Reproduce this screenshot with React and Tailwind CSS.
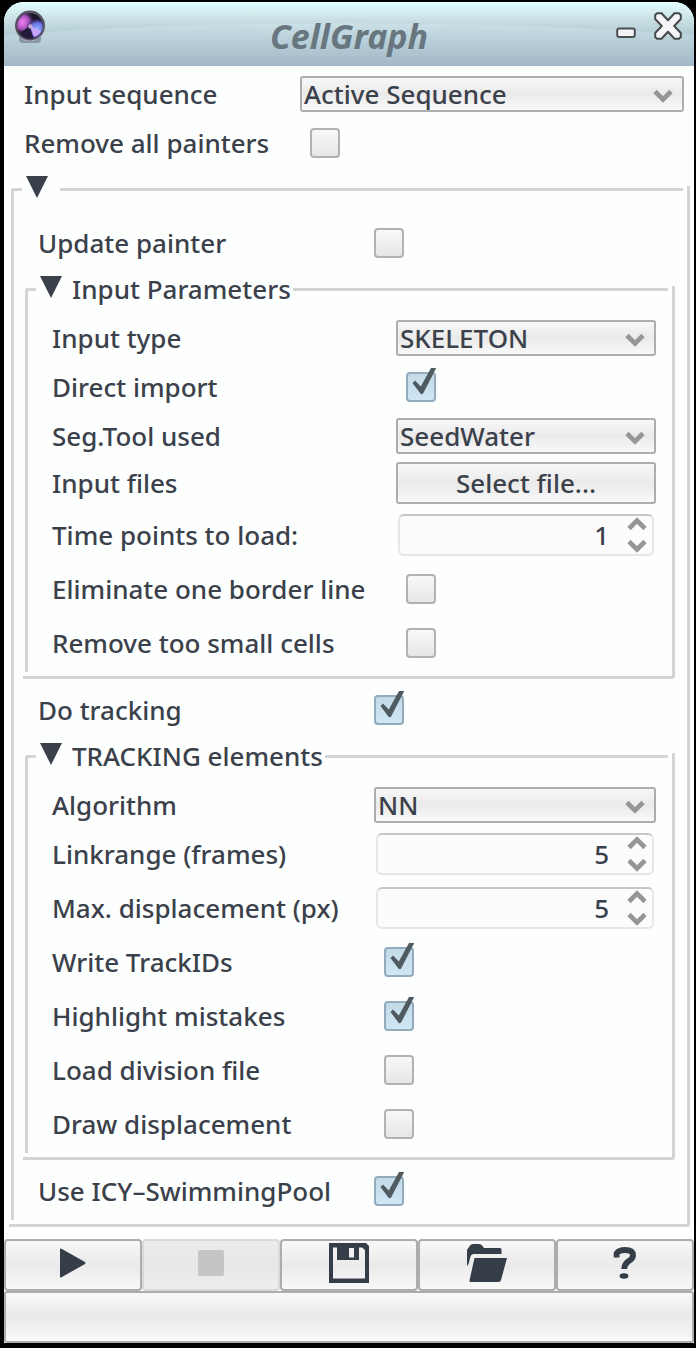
import { useState } from "react";

const face =
  "rounded-[3px] border-2 border-[#adadad] bg-linear-to-b from-[#f8f8f8] via-[#eaeaea] to-[#f9f9f9]";

function Row({ id, label, cols, short, children }) {
  return (
    <div className={`grid items-center ${cols} ${short ? "h-11" : "h-[54px]"}`}>
      <label htmlFor={id} className="whitespace-nowrap">
        {label}
      </label>
      {children}
    </div>
  );
}

function Chevron({ up }) {
  return (
    <svg viewBox="0 0 20 14" className="h-[14px] w-5" fill="none" stroke="#969696" strokeWidth="4.6" aria-hidden="true">
      <path d={up ? "M2 11.5L10 3.5L18 11.5" : "M2 2.5L10 10.5L18 2.5"} />
    </svg>
  );
}

function Select({ id, options }) {
  return (
    <div className="grid items-center">
      <select id={id} className={`col-start-1 row-start-1 h-9 w-full appearance-none pl-[2px] pr-10 leading-8 ${face}`}>
        {options.map((o) => (
          <option key={o}>{o}</option>
        ))}
      </select>
      <span className="pointer-events-none col-start-1 row-start-1 mr-[11px] mt-1 justify-self-end">
        <Chevron />
      </span>
    </div>
  );
}

function Check({ id, checked }) {
  return (
    <div className="ml-[10px] grid w-[30px]">
      <input
        id={id}
        type="checkbox"
        defaultChecked={checked}
        className="peer col-start-1 row-start-1 size-[30px] appearance-none rounded-[4px] border-2 border-[#b2b2b2] bg-linear-to-b from-[#f8f8f8] to-[#e6e6e6] checked:border-[#93abbd] checked:from-[#c3dae7] checked:to-[#cfe7f4]"
      />
      <svg
        viewBox="0 0 30 30"
        className="pointer-events-none invisible col-start-1 row-start-1 size-[30px] overflow-visible peer-checked:visible"
        fill="#505a61"
        aria-hidden="true"
      >
        <path d="M6.5 11L9 8.6L14.8 14.5L25 -4H30.2L17.4 21Q15.7 23.5 14 21Z" />
      </svg>
    </div>
  );
}

function Spinner({ id, initial, label }) {
  const [value, setValue] = useState(initial);
  return (
    <div className="mx-[2px] flex h-[42px] items-center rounded-[6px] border-2 border-[#e6e6e6] border-t-[#c6c6c6] bg-[#fcfcfc]">
      <input
        id={id}
        type="text"
        inputMode="numeric"
        value={value}
        onChange={(e) => setValue(Number(e.target.value) || 0)}
        className="w-0 flex-1 bg-transparent pr-[18px] text-right outline-none"
      />
      <div className="mr-[5px] flex flex-col gap-2">
        <button type="button" aria-label={`Increase ${label}`} onClick={() => setValue(value + 1)}>
          <Chevron up />
        </button>
        <button type="button" aria-label={`Decrease ${label}`} onClick={() => setValue(value - 1)}>
          <Chevron />
        </button>
      </div>
    </div>
  );
}

function Group({ title, className, children }) {
  return (
    <section className={className}>
      <div className="flex h-[38px] items-center pl-[2px]">
        <span className="h-5 w-[11px] self-end rounded-tl-[3px] border-l-[3px] border-t-[3px] border-[#d3d4d4]" />
        <button type="button" className="ml-1 flex items-center whitespace-nowrap" aria-label={title || "Toggle group"}>
          <svg viewBox="0 0 22 22" className="mb-1 size-[22px]" fill="#3b414b" aria-hidden="true">
            <path d="M0 0H22L11 22Z" />
          </svg>
          <span className="ml-[10px] mr-[2px]">{title}</span>
        </button>
        <span className="h-[3px] flex-1 bg-[#d3d4d4]" />
        <span className="ml-1 h-[22px] w-[3px] self-end bg-[#d3d4d4]" />
      </div>
      <div className="flex">
        <span className="mb-1 ml-[2px] w-[3px] bg-[#d3d4d4]" />
        <div className="min-w-0 flex-1 pt-2">{children}</div>
        <span className="w-[3px] bg-[#d3d4d4]" />
      </div>
      <div className="h-[3px] rounded-br-[3px] bg-[#d3d4d4]" />
    </section>
  );
}

const top = "grid-cols-[276px_1fr] pl-5 pr-[10px]";
const outer = "grid-cols-[326px_1fr] pl-6 pr-4";
const params = "grid-cols-[344px_1fr] pl-6 pr-4";
const tracking = "grid-cols-[322px_1fr] pl-6 pr-4";

function ToolButton({ label, disabled, children }) {
  return (
    <button
      type="button"
      aria-label={label}
      disabled={disabled}
      className={
        disabled
          ? "flex h-[52px] items-center justify-center rounded-[4px] border-2 border-[#d9d9d9] bg-linear-to-b from-[#ececec] via-[#e6e7e7] to-[#eeeeee]"
          : "flex h-[52px] items-center justify-center rounded-[4px] border-2 border-[#adadad] bg-linear-to-b from-[#f8f8f8] via-[#eaeaea] to-[#f9f9f9]"
      }
    >
      {children}
    </button>
  );
}

function TitleBar() {
  return (
    <header className="grid h-16 overflow-hidden rounded-t-[20px] bg-linear-to-b from-[#e4f6fb] via-[#bfd6de] to-[#a1b7c7]">
      <svg viewBox="0 0 690 64" preserveAspectRatio="none" className="col-start-1 row-start-1 h-16 w-full" aria-hidden="true">
        <defs>
          <linearGradient id="gloss" x1="0" y1="0" x2="0" y2="1">
            <stop offset="0" stopColor="#e2feff" />
            <stop offset="0.6" stopColor="#c6dde1" />
            <stop offset="1" stopColor="#b0cbd2" />
          </linearGradient>
        </defs>
        <path d="M0 0H690V33Q520 21 345 21T0 33Z" fill="url(#gloss)" />
      </svg>
      <div className="col-start-1 row-start-1 flex items-start pl-[10px] pr-3">
        <svg viewBox="0 0 32 34" className="mt-[7px] h-[34px] w-8" aria-hidden="true">
          <defs>
            <radialGradient id="lensPink" cx="0.2" cy="0.35" r="0.5">
              <stop offset="0" stopColor="#f07ff4" />
              <stop offset="0.55" stopColor="#a551b8" />
              <stop offset="1" stopColor="#1d1430" stopOpacity="0" />
            </radialGradient>
            <radialGradient id="lensBlue" cx="0.78" cy="0.62" r="0.46">
              <stop offset="0" stopColor="#8cb8ff" />
              <stop offset="0.55" stopColor="#6a6be0" />
              <stop offset="1" stopColor="#1d1430" stopOpacity="0" />
            </radialGradient>
          </defs>
          <rect x="5" y="24" width="22" height="10" rx="4" fill="#8596a5" />
          <circle cx="16" cy="18" r="14.5" fill="#a9a8bd" />
          <circle cx="16" cy="16.5" r="15" fill="#565465" />
          <circle cx="16" cy="17" r="12.8" fill="#191426" />
          <circle cx="16" cy="17" r="12.8" fill="url(#lensPink)" />
          <circle cx="16" cy="17" r="12.8" fill="url(#lensBlue)" />
          <path d="M16 17L6 24Q11 30 19 29Z" fill="#221a38" />
          <path d="M16 17L20 28Q25 26 27 22Z" fill="#c7a6fa" />
          <circle cx="16.5" cy="17.5" r="2.2" fill="#c7a5d8" />
        </svg>
        <h1 className="flex-1 pl-9 pt-[14px] text-center text-[34px] font-bold italic leading-10 text-[#687680]">CellGraph</h1>
        <button type="button" aria-label="Minimize" className="mt-[25px]">
          <svg viewBox="0 0 20 12" className="h-3 w-5" aria-hidden="true">
            <rect x="1.2" y="1.6" width="17.6" height="8.4" rx="2" fill="#f4f4f8" stroke="#4b4f50" strokeWidth="2" />
          </svg>
        </button>
        <button type="button" aria-label="Close" className="ml-[18px] mt-[10px]">
          <svg viewBox="0 0 28 28" className="size-7" aria-hidden="true">
            <path
              d="M3 1.2H7.5L14 8.2L20.5 1.2H25L26.8 3V7L20.2 14L26.8 21V25L25 26.8H20.5L14 19.8L7.5 26.8H3L1.2 25V21L7.8 14L1.2 7V3Z"
              fill="#f5f5fa"
              stroke="#46494b"
              strokeWidth="2"
              strokeLinejoin="round"
            />
          </svg>
        </button>
      </div>
    </header>
  );
}

export default function App() {
  return (
    <div className="min-h-screen bg-black pb-1 pl-1 pr-[2px] pt-[2px] font-['Noto_Sans',sans-serif] text-[26px] font-medium leading-9 text-[#3b414b]">
      <main className="rounded-t-[20px] bg-[#fdfefe]">
        <TitleBar />
        <div className="pt-[6px]">
          <Row id="sequence" label="Input sequence" cols={top} short>
            <Select id="sequence" options={["Active Sequence", "No Sequence"]} />
          </Row>
          <Row id="painters" label="Remove all painters" cols={top}>
            <Check id="painters" />
          </Row>

          <Group title="" className="ml-[5px] mr-1">
            <Row id="update" label="Update painter" cols={outer}>
              <Check id="update" />
            </Row>

            <Group title="Input Parameters" className="ml-[9px] mr-3">
              <Row id="type" label="Input type" cols={params} short>
                <Select id="type" options={["SKELETON"]} />
              </Row>
              <Row id="direct" label="Direct import" cols={params}>
                <Check id="direct" checked />
              </Row>
              <Row id="tool" label="Seg.Tool used" cols={params} short>
                <Select id="tool" options={["SeedWater"]} />
              </Row>
              <div className="-my-[2px]">
                <Row id="files" label="Input files" cols={params}>
                  <button id="files" type="button" className={`h-[42px] ${face}`}>
                    Select file...
                  </button>
                </Row>
              </div>
              <Row id="points" label="Time points to load:" cols={params}>
                <Spinner id="points" initial={1} label="time points" />
              </Row>
              <Row id="border" label="Eliminate one border line" cols={params}>
                <Check id="border" />
              </Row>
              <Row id="small" label="Remove too small cells" cols={params}>
                <Check id="small" />
              </Row>
              <div className="h-[6px]" />
            </Group>

            <div className="pt-1">
              <Row id="tracking" label="Do tracking" cols={outer}>
                <Check id="tracking" checked />
              </Row>
            </div>

            <Group title="TRACKING elements" className="ml-[9px] mr-3">
              <Row id="algorithm" label="Algorithm" cols={tracking} short>
                <Select id="algorithm" options={["NN"]} />
              </Row>
              <Row id="linkrange" label="Linkrange (frames)" cols={tracking}>
                <Spinner id="linkrange" initial={5} label="linkrange" />
              </Row>
              <Row id="displacement" label="Max. displacement (px)" cols={tracking}>
                <Spinner id="displacement" initial={5} label="max. displacement" />
              </Row>
              <Row id="ids" label="Write TrackIDs" cols={tracking}>
                <Check id="ids" checked />
              </Row>
              <Row id="mistakes" label="Highlight mistakes" cols={tracking}>
                <Check id="mistakes" checked />
              </Row>
              <Row id="division" label="Load division file" cols={tracking}>
                <Check id="division" />
              </Row>
              <Row id="draw" label="Draw displacement" cols={tracking}>
                <Check id="draw" />
              </Row>
              <div className="h-[6px]" />
            </Group>

            <div className="pb-[6px] pt-1">
              <Row id="pool" label="Use ICY–SwimmingPool" cols={outer}>
                <Check id="pool" checked />
              </Row>
            </div>
          </Group>
        </div>

        <footer className="pt-3">
          <div className="grid grid-cols-5">
            <ToolButton label="Run">
              <svg viewBox="0 0 26 30" className="mb-1 h-[30px] w-[26px]" fill="#353d49" aria-hidden="true">
                <path d="M0 1.5Q0 0 1.5 0.8L25 14Q26 15 25 16L1.5 29.2Q0 30 0 28.5Z" />
              </svg>
            </ToolButton>
            <ToolButton label="Stop" disabled>
              <span className="mb-1 size-[26px] rounded-[2px] bg-[#c5c5c5]" />
            </ToolButton>
            <ToolButton label="Save">
              <svg viewBox="0 0 40 40" className="mb-1 size-10" aria-hidden="true">
                <path
                  fillRule="evenodd"
                  fill="#353d49"
                  d="M0 0H37L40 3V40H0ZM4 4.5V35.5H36V7L33 4.5H30V17H8V4.5ZM20 5V14.5H25V5Z"
                />
              </svg>
            </ToolButton>
            <ToolButton label="Open">
              <svg viewBox="0 0 40 38" className="mb-1 h-[38px] w-10" fill="#353d49" aria-hidden="true">
                <path d="M0 22V6L3 1.5Q4 0 6 0H12Q14 0 15.5 2L17 4H33Q34.5 4 34.5 5.5V10H7Q4 10 3.5 12.5L1.5 20Z" />
                <path d="M7.5 14H40L34 36Q33.5 38 31.5 38H4Q2 38 2.6 36Z" />
              </svg>
            </ToolButton>
            <ToolButton label="Help">
              <svg viewBox="0 0 24 32" className="mb-1 h-8 w-6" fill="none" aria-hidden="true">
                <path d="M3.6 10.5V6.4Q6 3 12 3Q20 3 20 8.2Q20 11.6 15.5 14.2Q11.4 16.8 11.2 22" stroke="#353d49" strokeWidth="5.8" />
                <ellipse cx="11" cy="29" rx="4.4" ry="2.8" fill="#353d49" />
              </svg>
            </ToolButton>
          </div>
          <div role="status" className={`h-[52px] ${face}`} />
        </footer>
      </main>
    </div>
  );
}
